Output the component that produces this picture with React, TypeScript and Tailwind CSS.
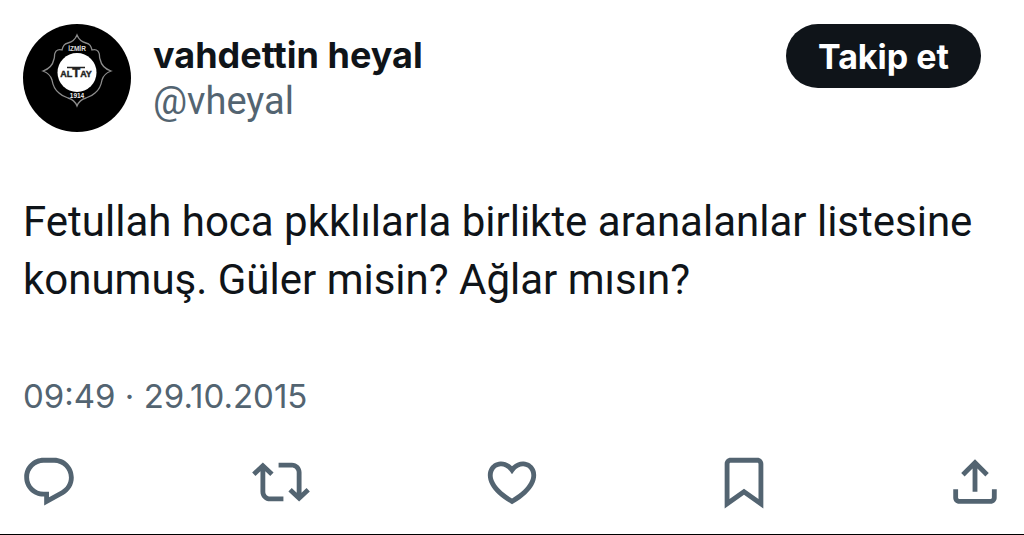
type IconProps = {
    label: string;
    path: string;
};

const actions: IconProps[] = [
    {
        label: "Yanıtla",
        path: "M1.751 10c0-4.42 3.584-8 8.005-8h4.366c4.49 0 8.129 3.64 8.129 8.13 0 2.96-1.607 5.68-4.196 7.11l-8.054 4.46v-3.69h-.067c-4.49.1-8.183-3.51-8.183-8.01zm8.005-6c-3.317 0-6.005 2.69-6.005 6 0 3.37 2.77 6.08 6.138 6.01l.351-.01h1.761v2.3l5.087-2.81c1.951-1.08 3.163-3.13 3.163-5.36 0-3.39-2.744-6.13-6.129-6.13H9.756z",
    },
    {
        label: "Yeniden gönder",
        path: "M4.5 3.88l4.432 4.14-1.364 1.46L5.5 7.55V16c0 1.1.896 2 2 2H13v2H7.5c-2.209 0-4-1.79-4-4V7.55L1.432 9.48.068 8.02 4.5 3.88zM16.5 6H11V4h5.5c2.209 0 4 1.79 4 4v8.45l2.068-1.93 1.364 1.46-4.432 4.14-4.432-4.14 1.364-1.46 2.068 1.93V8c0-1.1-.896-2-2-2z",
    },
    {
        label: "Beğen",
        path: "M16.697 5.5c-1.222-.06-2.679.51-3.89 2.16l-.805 1.09-.806-1.09C9.984 6.01 8.526 5.44 7.304 5.5c-1.243.07-2.349.78-2.91 1.91-.552 1.12-.633 2.78.479 4.82 1.074 1.97 3.257 4.27 7.129 6.61 3.87-2.34 6.052-4.64 7.126-6.61 1.111-2.04 1.03-3.7.477-4.82-.561-1.13-1.666-1.84-2.908-1.91zm4.187 7.69c-1.351 2.48-4.001 5.12-8.379 7.67l-.503.3-.504-.3c-4.379-2.55-7.029-5.19-8.382-7.67-1.36-2.5-1.41-4.86-.514-6.67.887-1.79 2.647-2.91 4.601-3.01 1.651-.09 3.368.56 4.798 2.01 1.429-1.45 3.146-2.1 4.796-2.01 1.954.1 3.714 1.22 4.601 3.01.896 1.81.846 4.17-.514 6.67z",
    },
    {
        label: "Yer işareti",
        path: "M4 4.5C4 3.12 5.119 2 6.5 2h11C18.881 2 20 3.12 20 4.5v18.44l-8-5.71-8 5.71V4.5zM6.5 4c-.276 0-.5.22-.5.5v14.56l6-4.29 6 4.29V4.5c0-.28-.224-.5-.5-.5h-11z",
    },
    {
        label: "Paylaş",
        path: "M12 2.59l5.7 5.7-1.41 1.42L13 6.41V16h-2V6.41l-3.3 3.3-1.41-1.42L12 2.59zM21 15l-.02 3.51c0 1.38-1.12 2.49-2.5 2.49H5.5C4.11 21 3 19.88 3 18.5V15h2v3.5c0 .28.22.5.5.5h12.98c.28 0 .5-.22.5-.5L19 15h2z",
    },
];

function ActionButton({ label, path }: IconProps) {
    return (
        <button type="button" aria-label={label} className="cursor-pointer">
            <svg viewBox="0 0 24 24" fill="currentColor" className="h-[58px] w-[58px]">
                <path d={path} />
            </svg>
        </button>
    );
}

function Avatar() {
    return (
        <svg
            viewBox="0 0 108 108"
            className="h-[108px] w-[108px] shrink-0 rounded-full bg-black"
            fontFamily="'Liberation Sans', Arial, sans-serif"
            fontWeight="700"
            textAnchor="middle"
        >
            <path
                d="M54 11c2 5 5 7 9 8s5 3 6 7c3-1 6 0 7 3 1 2 0 4 1 6 1 5 5 10 11 12-5 2-8 5-9 9-1 6-3 10-7 13-3 3-6 4-9 5-4 1-7 3-9 8-2-5-5-7-9-8-3-1-6-2-9-5-4-3-6-7-7-13-1-4-4-7-9-9 6-2 10-7 11-12 1-2 0-4 1-6 1-3 4-4 7-3 1-4 2-6 6-7s7-3 9-8z"
                fill="none"
                stroke="#8c8c8c"
                strokeWidth="1.3"
            />
            <circle cx="54" cy="48.5" r="19.5" fill="#fff" />
            <text x="53" y="53" fontSize="9" fill="#222" stroke="#222" strokeWidth="0.4">
                <tspan>AL</tspan>
                <tspan fontSize="13">T</tspan>
                <tspan>AY</tspan>
            </text>
            <path d="M44 43.5h18" stroke="#222" strokeWidth="1.6" />
            <text x="54" y="27" fontSize="6.5" fill="#ddd">
                İZMİR
            </text>
            <text x="54" y="74" fontSize="6.5" fill="#eee">
                1914
            </text>
        </svg>
    );
}

function App() {
    return (
        <main className="border-b border-black bg-white pt-6 font-['Roboto',sans-serif] text-[#0f1419]">
            <article>
                <header className="flex items-start px-[23px]">
                    <Avatar />
                    <div className="ml-[22px] min-w-0 flex-1 pt-2">
                        <h1 className="font-['Inter',sans-serif] text-[36px] leading-[46px] font-bold">
                            vahdettin heyal
                        </h1>
                        <p className="text-[38px] leading-[46px] text-[#536471]">@vheyal</p>
                    </div>
                    <button
                        type="button"
                        className="mr-5 h-16 cursor-pointer rounded-full bg-[#0f1419] px-8 font-['Inter',sans-serif] text-[34px] font-bold text-white"
                    >
                        Takip et
                    </button>
                </header>
                <p className="mt-[61px] px-[23px] text-[42px] leading-[58px]">
                    Fetullah hoca pkklılarla birlikte aranalanlar listesine konumuş. Güler misin? Ağlar
                    mısın?
                </p>
                <p className="mt-16 px-[23px] font-['Inter',sans-serif] text-[33px] leading-[46px] text-[#536471]">
                    <time dateTime="2015-10-29T09:49">09:49 · 29.10.2015</time>
                </p>
                <div className="mt-[34px] flex justify-between px-5 pb-[23px] text-[#536471]">
                    {actions.map((action) => (
                        <ActionButton key={action.label} {...action} />
                    ))}
                </div>
            </article>
        </main>
    );
}

export default App;
